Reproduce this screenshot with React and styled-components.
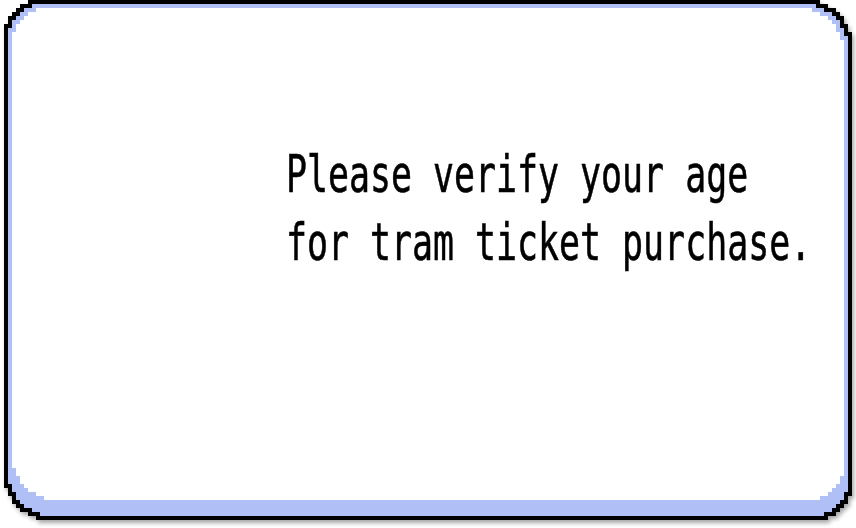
import React from 'react';
import styled, { createGlobalStyle } from 'styled-components';

const GlobalStyle = createGlobalStyle`
  html, body {
    margin: 0;
    padding: 0;
    background: #ffffff;
  }
`;

// pixel staircase for a rounded corner: [indent, rowEnd]
const steps = [
  [32, 0],
  [24, 4],
  [16, 8],
  [12, 12],
  [8, 16],
  [4, 24],
  [0, 32],
];

function stairPolygon() {
  const pts = [];
  const R = (n) => `calc(100% - ${n}px)`;
  // top-left, going up from left edge
  for (let i = steps.length - 1; i > 0; i--) {
    const [x, y] = steps[i];
    const [, yPrev] = steps[i - 1];
    pts.push(`${x}px ${y}px`, `${x}px ${yPrev}px`);
  }
  pts.push('32px 0px');
  // top-right
  for (let i = 0; i < steps.length - 1; i++) {
    const [x, y] = steps[i];
    const [, yNext] = steps[i + 1];
    pts.push(`${R(x)} ${y}px`, `${R(x)} ${yNext}px`);
  }
  pts.push(`100% 32px`);
  // bottom-right
  for (let i = steps.length - 1; i > 0; i--) {
    const [x, y] = steps[i];
    const [, yPrev] = steps[i - 1];
    pts.push(`${R(x)} ${R(y)}`, `${R(x)} ${R(yPrev)}`);
  }
  pts.push(`${R(32)} 100%`);
  // bottom-left
  for (let i = 0; i < steps.length - 1; i++) {
    const [x, y] = steps[i];
    const [, yNext] = steps[i + 1];
    pts.push(`${x}px ${R(y)}`, `${x}px ${R(yNext)}`);
  }
  pts.push(`0px ${R(32)}`);
  return `polygon(${pts.join(', ')})`;
}

const stairs = stairPolygon();

const Screen = styled.div`
  width: 856px;
  height: 528px;
  padding: 0 0 0 4px;
  box-sizing: border-box;
`;

const Shadow = styled.div`
  width: 848px;
  height: 520px;
  filter: drop-shadow(2px 3px 2px rgba(0, 0, 0, 0.35));
`;

const Outline = styled.div`
  height: 100%;
  box-sizing: border-box;
  padding: 4px;
  background: #000000;
  clip-path: ${stairs};
`;

const Rim = styled.div`
  height: 100%;
  box-sizing: border-box;
  padding: 4px 4px 16px 4px;
  background: #b0c0f6;
  clip-path: ${stairs};
`;

const Panel = styled.div`
  height: 100%;
  box-sizing: border-box;
  padding: 132px 0 0 274px;
  background: #ffffff;
  clip-path: ${stairs};
`;

const Message = styled.p`
  margin: 0;
  font-family: 'DejaVu Sans Mono', 'Liberation Mono', monospace;
  font-size: 52px;
  line-height: 68px;
  color: #000000;
  white-space: pre;
  transform: scaleX(0.671);
  transform-origin: left top;
  -webkit-text-stroke: 0.6px #000000;
`;

export default function App() {
  return (
    <>
      <GlobalStyle />
      <Screen>
        <Shadow>
          <Outline>
            <Rim>
              <Panel>
                <Message>
                  {'Please verify your age\nfor tram ticket purchase.'}
                </Message>
              </Panel>
            </Rim>
          </Outline>
        </Shadow>
      </Screen>
    </>
  );
}
